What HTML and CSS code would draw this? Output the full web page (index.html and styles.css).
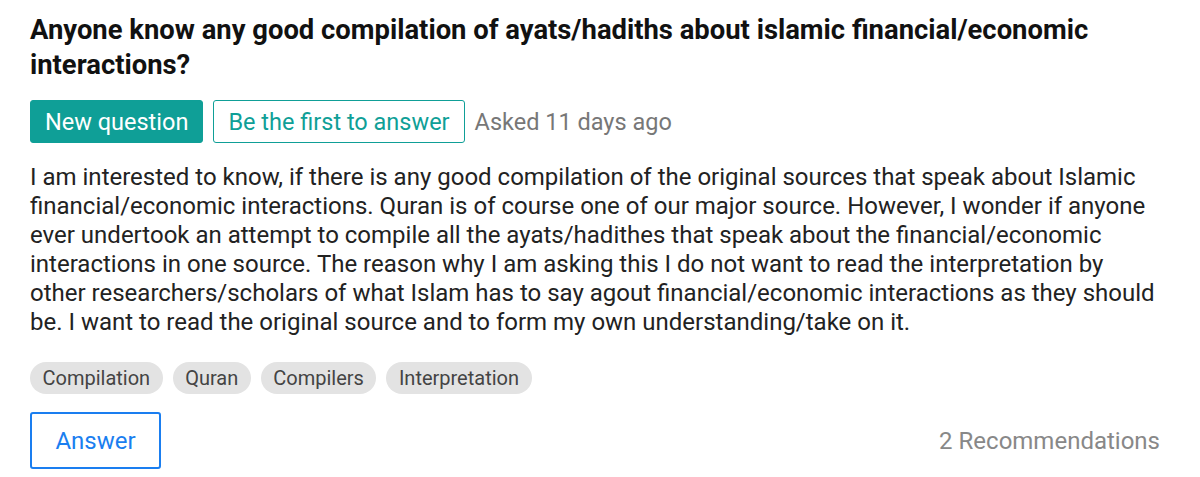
FILE: index.html
```html
<!DOCTYPE html>
<html lang="en">
<head>
<meta charset="utf-8">
<title>Question</title>
<link rel="stylesheet" href="styles.css">
</head>
<body>
<main class="question">
  <h1 class="title">Anyone know any good compilation of ayats/hadiths about islamic financial/economic interactions?</h1>
  <div class="meta">
    <span class="btn btn-solid">New question</span>
    <span class="btn btn-outline">Be the first to answer</span>
    <span class="asked">Asked 11 days ago</span>
  </div>
  <p class="body">I am interested to know, if there is any good compilation of the original sources that speak about Islamic financial/economic interactions. Quran is of course one of our major source. However, I wonder if anyone ever undertook an attempt to compile all the ayats/hadithes that speak about the financial/economic interactions in one source. The reason why I am asking this I do not want to read the interpretation by other researchers/scholars of what Islam has to say agout financial/economic interactions as they should be. I want to read the original source and to form my own understanding/take on it.</p>
  <ul class="tags">
    <li class="tag">Compilation</li>
    <li class="tag">Quran</li>
    <li class="tag">Compilers</li>
    <li class="tag">Interpretation</li>
  </ul>
  <div class="footer">
    <span class="answer">Answer</span>
    <span class="recs">2 Recommendations</span>
  </div>
</main>
</body>
</html>
```
FILE: styles.css
```css
* { box-sizing: border-box; }
html, body { margin: 0; padding: 0; background: #fff; }
body { font-family: Roboto, "Noto Sans", Arial, sans-serif; color: #222; }
.question { padding: 13px 40px 0 30px; }
.title {
  margin: 0;
  font-size: 27.4px;
  line-height: 35px;
  font-weight: 700;
  color: #111;
}
.meta {
  display: flex;
  align-items: center;
  gap: 10px;
  margin-top: 17px;
}
.btn {
  display: inline-flex;
  align-items: center;
  height: 43px;
  padding: 0 14px;
  font-size: 23.5px;
  border-radius: 3px;
  border: 1px solid #0f9f97;
}
.btn-solid { background: #0f9f97; color: #fff; }
.btn-outline { background: #fff; color: #0f9f97; }
.asked { font-size: 23.5px; color: #777; }
.body {
  margin: 20px 0 0;
  font-size: 24px;
  line-height: 29px;
  color: #222;
}
.tags {
  list-style: none;
  margin: 25px 0 0;
  padding: 0;
  display: flex;
  gap: 10px;
}
.tag {
  height: 32px;
  display: flex;
  align-items: center;
  padding: 0 12.5px;
  border-radius: 16px;
  background: #e3e3e3;
  color: #444;
  font-size: 20px;
}
.footer {
  display: flex;
  align-items: center;
  justify-content: space-between;
  margin-top: 18px;
}
.answer {
  width: 131px;
  height: 57px;
  display: flex;
  align-items: center;
  justify-content: center;
  border: 2px solid #1a7ef0;
  border-radius: 3px;
  color: #1a7ef0;
  font-size: 24px;
}
.recs { font-size: 24px; color: #888; }
```
